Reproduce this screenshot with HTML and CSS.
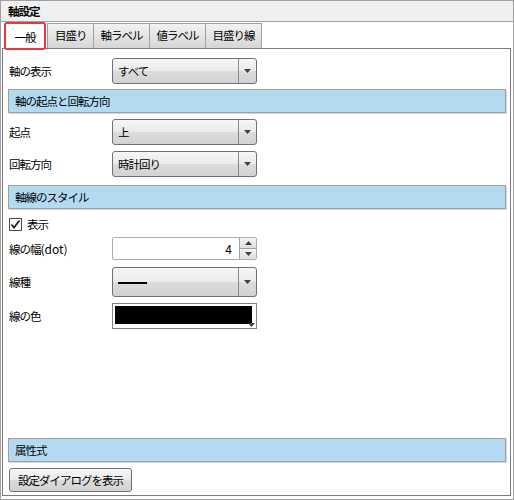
FILE: index.html
```html
<!DOCTYPE html>
<html lang="ja">
<head>
<meta charset="utf-8">
<link rel="stylesheet" href="styles.css">
</head>
<body>
<div class="window">
  <div class="titlebar">軸設定</div>
  <div class="main">
    <div class="tabs">
      <div class="tab selected">一般</div>
      <div class="tab">目盛り</div>
      <div class="tab">軸ラベル</div>
      <div class="tab">値ラベル</div>
      <div class="tab">目盛り線</div>
    </div>
    <div class="panel">
      <div class="row r1">
        <span class="label">軸の表示</span>
        <div class="combo"><span class="ctext">すべて</span><span class="carrow"><svg width="7" height="4" viewBox="0 0 7 4"><path d="M0 0H7L3.5 4Z" fill="#404040"/></svg></span></div>
      </div>
      <div class="section s1">軸の起点と回転方向</div>
      <div class="row r2">
        <span class="label">起点</span>
        <div class="combo"><span class="ctext">上</span><span class="carrow"><svg width="7" height="4" viewBox="0 0 7 4"><path d="M0 0H7L3.5 4Z" fill="#404040"/></svg></span></div>
      </div>
      <div class="row r3">
        <span class="label">回転方向</span>
        <div class="combo"><span class="ctext">時計回り</span><span class="carrow"><svg width="7" height="4" viewBox="0 0 7 4"><path d="M0 0H7L3.5 4Z" fill="#404040"/></svg></span></div>
      </div>
      <div class="section s2">軸線のスタイル</div>
      <div class="row r4">
        <svg class="check" width="13" height="13" viewBox="0 0 13 13"><rect x="0.5" y="0.5" width="12" height="12" fill="#fff" stroke="#4a4a4a"/><path d="M2.5 6.5L5 9.5L10.5 2.5" fill="none" stroke="#202020" stroke-width="1.8"/></svg>
        <span class="clabel">表示</span>
      </div>
      <div class="row r5">
        <span class="label">線の幅<span class="latin">(dot)</span></span>
        <div class="spin"><span class="stext">4</span><span class="sbtns"><span class="sbtn"><svg width="7" height="4" viewBox="0 0 7 4"><path d="M0 4H7L3.5 0Z" fill="#404040"/></svg></span><span class="sbtn"><svg width="7" height="4" viewBox="0 0 7 4"><path d="M0 0H7L3.5 4Z" fill="#404040"/></svg></span></span></div>
      </div>
      <div class="row r6">
        <span class="label">線種</span>
        <div class="combo tall"><span class="ctext"><span class="lineSample"></span></span><span class="carrow"><svg width="7" height="4" viewBox="0 0 7 4"><path d="M0 0H7L3.5 4Z" fill="#404040"/></svg></span></div>
      </div>
      <div class="row r7">
        <span class="label">線の色</span>
        <div class="colorbox"><div class="swatch"></div><svg class="carr" width="7" height="4" viewBox="0 0 7 4"><path d="M0 0H7L3.5 4Z" fill="#404040"/></svg></div>
      </div>
      <div class="spacer"></div>
      <div class="section s3">属性式</div>
      <div class="btnrow"><div class="button">設定ダイアログを表示</div></div>
    </div>
  </div>
</div>
</body>
</html>
```

FILE: styles.css
```css
html, body {
  margin: 0;
  padding: 0;
  background: #fff;
}
body {
  font-family: "Noto Sans CJK JP", "Noto Sans", sans-serif;
  font-size: 11.5px;
  letter-spacing: -1px;
  color: #000;
}
.latin {
  letter-spacing: 0;
  font-size: 12px;
}
.window {
  width: 514px;
  height: 500px;
  box-sizing: border-box;
  border: 1px solid #a0a0a0;
  display: flex;
  flex-direction: column;
}
.titlebar {
  height: 20px;
  line-height: 20px;
  background: #f0f0f0;
  border-bottom: 1px solid #a0a0a0;
  padding-left: 7px;
  font-weight: bold;
}
.main {
  flex: 1;
  display: flex;
  flex-direction: column;
  padding: 0 2px 3px 1px;
}
.tabs {
  display: flex;
  height: 26px;
  padding-left: 2px;
  position: relative;
  z-index: 2;
}
.tab {
  margin-top: 1px;
  height: 25px;
  box-sizing: border-box;
  border: 1px solid #a0a0a0;
  border-bottom: none;
  border-left: none;
  background: linear-gradient(#f2f2f2, #e4e4e4 50%, #d6d6d6);
  padding: 0 6px 0 7px;
  line-height: 23px;
  white-space: nowrap;
}
.tab.selected {
  margin-top: 0;
  height: 28px;
  width: 42px;
  text-align: center;
  padding: 0;
  background: #fff;
  border: 2px solid #e83a3a;
  border-radius: 3px;
  line-height: 26px;
  margin-right: 1px;
}
.tab.selected + .tab {
  border-left: 1px solid #a0a0a0;
}
.panel {
  flex: 1;
  border: 1px solid #7a7a7a;
  display: flex;
  flex-direction: column;
  padding: 0 4px 3px 5px;
  position: relative;
  z-index: 1;
}
.row {
  display: flex;
  align-items: center;
  padding-left: 1px;
}
.label {
  width: 103px;
  flex: none;
}
.r1 { margin-top: 9px; }
.r2 { margin-top: 6px; }
.r3 { margin-top: 6px; }
.r4 { margin-top: 8px; height: 14px; }
.r5 { margin-top: 6px; }
.r6 { margin-top: 7px; }
.r7 { margin-top: 6px; }
.combo {
  width: 145px;
  height: 26px;
  box-sizing: border-box;
  border: 1px solid #707070;
  border-radius: 3px;
  background: linear-gradient(#f6f6f6, #eaeaea 50%, #dcdcdc 51%, #d2d2d2);
  display: flex;
}
.combo.tall { height: 30px; }
.ctext {
  flex: 1;
  padding-left: 5px;
  display: flex;
  align-items: center;
  border-right: 1px solid #8a8a8a;
}
.carrow {
  width: 17px;
  display: flex;
  align-items: center;
  justify-content: center;
}
.lineSample {
  display: block;
  width: 29px;
  height: 2px;
  background: #000;
  margin-top: 2px;
}
.section {
  height: 24px;
  box-sizing: border-box;
  border: 1px solid #a0a0a0;
  background: #b4daf2;
  box-shadow: 1px 1px 0 #d8d8d8;
  padding-left: 6px;
  line-height: 22px;
}
.s1 { margin-top: 5px; }
.s2 { margin-top: 8px; }
.check { flex: none; }
.clabel { margin-left: 5px; }
.spin {
  width: 145px;
  height: 23px;
  box-sizing: border-box;
  border: 1px solid #abadb3;
  border-radius: 2px;
  background: #fff;
  display: flex;
}
.stext {
  flex: 1;
  text-align: right;
  padding-right: 7px;
  line-height: 21px;
  letter-spacing: 0;
  font-size: 12px;
}
.sbtns {
  width: 16px;
  display: flex;
  flex-direction: column;
  border-left: 1px solid #a0a0a0;
}
.sbtn {
  flex: 1;
  display: flex;
  align-items: center;
  justify-content: center;
  background: linear-gradient(#f4f4f4, #dedede);
}
.sbtn + .sbtn { border-top: 1px solid #a0a0a0; }
.colorbox {
  width: 145px;
  height: 26px;
  box-sizing: border-box;
  border: 1px solid #808080;
  padding: 2px 4px 4px 2px;
  background: #fff;
  position: relative;
}
.swatch {
  width: 100%;
  height: 100%;
  background: #000;
}
.carr {
  position: absolute;
  right: 1px;
  bottom: 1px;
}
.spacer { flex: 1; }
.btnrow { margin-top: 6px; padding-left: 1px; display: flex; }
.button {
  height: 24px;
  box-sizing: border-box;
  border: 1px solid #707070;
  border-radius: 3px;
  background: linear-gradient(#f6f6f6, #eaeaea 50%, #dcdcdc 51%, #d2d2d2);
  padding: 0 8px;
  line-height: 22px;
}
```
